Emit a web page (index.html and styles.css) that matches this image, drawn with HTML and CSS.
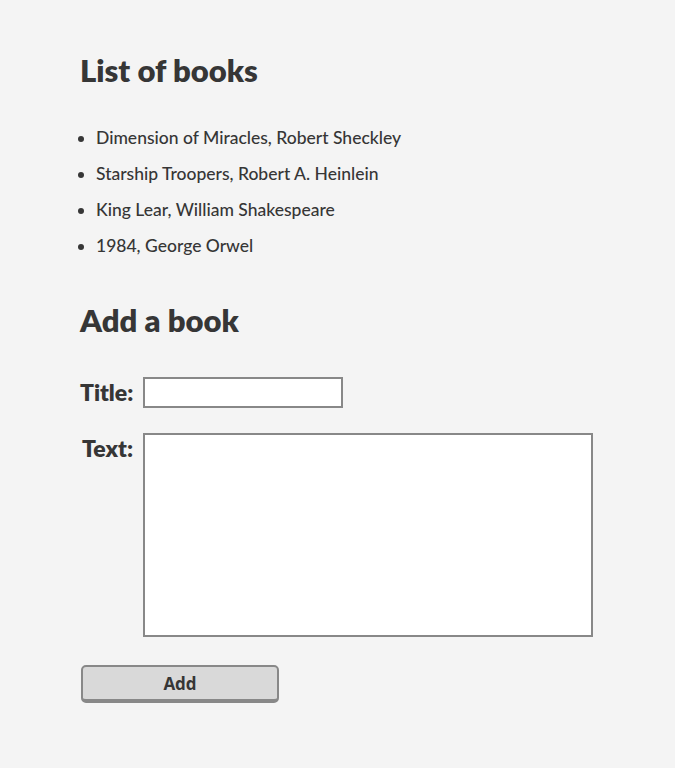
FILE: index.html
```html
<!DOCTYPE html>
<html lang="en">
<head>
    <meta charset="UTF-8">
    <meta name="viewport" content="width=device-width, initial-scale=1.0">
    <title>Books</title>
    <link rel="stylesheet" href="styles.css">
</head>
<body>
    <div class="page">
        <h1>List of books</h1>
        <ul class="books">
            <li>Dimension of Miracles, Robert Sheckley</li>
            <li>Starship Troopers, Robert A. Heinlein</li>
            <li>King Lear, William Shakespeare</li>
            <li>1984, George Orwel</li>
        </ul>

        <h1>Add a book</h1>
        <form class="book-form">
            <label for="title">Title:</label>
            <input type="text" id="title" name="title">

            <label for="text">Text:</label>
            <textarea id="text" name="text"></textarea>

            <button type="submit">Add</button>
        </form>
    </div>
</body>
</html>
```

FILE: styles.css
```css
/* Book list page */
body {
    margin: 0;
    background: #f4f4f4;
    color: #363636;
    font-family: Lato, sans-serif;
}
.page {
    padding: 48px 80px;
}
h1 {
    font-size: 31px;
    font-weight: 800;
    margin: 0 0 34px;
    line-height: 44px;
}
.books {
    margin: 0 0 40px;
    padding-left: 16px;
    font-size: 17.5px;
    font-weight: 500;
}
.books li {
    line-height: 24px;
    margin-bottom: 12px;
}
.book-form {
    display: grid;
    grid-template-columns: 53px 450px;
    column-gap: 10px;
    row-gap: 25px;
    align-items: start;
    padding-top: 1px;
}
.book-form label {
    font-size: 23px;
    font-weight: 800;
    text-align: right;
    line-height: 30px;
}
.book-form input {
    width: 200px;
    height: 31px;
    box-sizing: border-box;
    border: 2px solid #888;
    background: #fff;
    margin: 0;
}
.book-form textarea {
    width: 450px;
    height: 204px;
    box-sizing: border-box;
    border: 2px solid #888;
    background: #fff;
    resize: none;
    margin: 0;
}
.book-form button {
    grid-column: 1 / 3;
    justify-self: start;
    width: 198px;
    height: 38px;
    margin: 3px 0 0 1px;
    background: #d9d9d9;
    border: 2px solid #888;
    border-bottom-width: 4px;
    border-radius: 5px;
    color: #363636;
    font-family: "Open Sans", sans-serif;
    font-size: 17px;
    font-weight: 700;
}
```
